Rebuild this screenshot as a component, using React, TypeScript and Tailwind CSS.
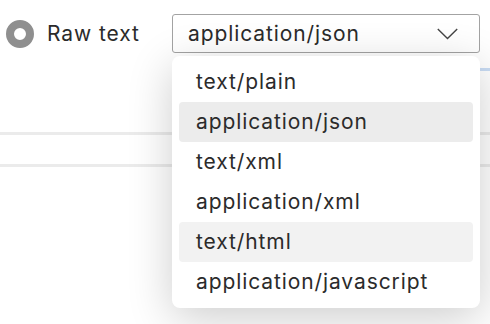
import React from "react";

const options = [
  "text/plain",
  "application/json",
  "text/xml",
  "application/xml",
  "text/html",
  "application/javascript",
];

export default function App() {
  const selected = "application/json";
  const hovered = "text/html";

  return (
    <div
      className="relative w-[490px] h-[324px] overflow-hidden bg-white text-[#2b2b2b] tracking-[0.9px]"
      style={{ fontFamily: "Inter, 'Noto Sans', sans-serif" }}
    >
      {/* top row */}
      <div className="flex items-center pt-[14px] pl-[6px] pr-[10px]">
        <div className="w-[28px] h-[28px] rounded-full border-[8px] border-[#8f8f8f] bg-white" />
        <span className="ml-[13px] text-[21px] leading-none">Raw text</span>
        <button
          type="button"
          className="ml-auto flex items-center justify-between w-[308px] h-[39px] pl-[15px] pr-[21px] border-[1.5px] border-[#a3a3a3] rounded-[3px] bg-white text-[21px] tracking-[0.9px]"
        >
          <span>{selected}</span>
          <svg width="21" height="12" viewBox="0 0 21 12" fill="none" stroke="#444" strokeWidth="1.4">
            <polyline points="0.8,1 10.5,10.5 20.2,1" />
          </svg>
        </button>
      </div>

      {/* content behind the menu */}
      <div className="mt-[15px] h-[3px] w-[30px] ml-auto bg-[#c9dcf4]" />
      <div className="mt-[61px] h-[3px] bg-[#ebebeb]" />
      <div className="mt-[29px] h-[3px] bg-[#ebebeb]" />

      {/* open menu */}
      <div className="absolute top-[56px] left-[172px] w-[308px] py-[6px] px-[7px] bg-white rounded-[8px] shadow-[0_10px_45px_rgba(0,0,0,0.2)]">
        {options.map((o) => (
          <div
            key={o}
            className={
              "h-[40px] flex items-center pl-[17px] rounded-[4px] text-[21px] " +
              (o === selected ? "bg-[#ececec]" : o === hovered ? "bg-[#f2f2f2]" : "")
            }
          >
            {o}
          </div>
        ))}
      </div>
    </div>
  );
}
